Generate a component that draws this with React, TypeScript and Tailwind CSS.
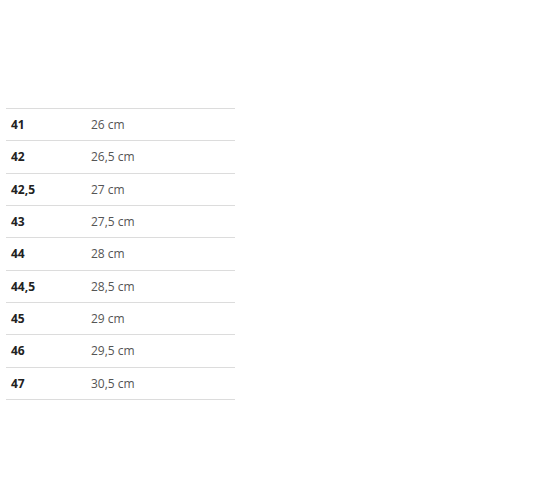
const sizes = [
  { eu: "41", cm: "26 cm" },
  { eu: "42", cm: "26,5 cm" },
  { eu: "42,5", cm: "27 cm" },
  { eu: "43", cm: "27,5 cm" },
  { eu: "44", cm: "28 cm" },
  { eu: "44,5", cm: "28,5 cm" },
  { eu: "45", cm: "29 cm" },
  { eu: "46", cm: "29,5 cm" },
  { eu: "47", cm: "30,5 cm" },
];

export default function App() {
  return (
    <div className="h-[490px] w-[560px] bg-white pt-[108px] pl-[6px] font-['Open_Sans',sans-serif]">
      <div className="w-[229px] border-t border-[#dcdcdc]">
        {sizes.map((s) => (
          <div
            key={s.eu}
            className="flex h-[32.33px] items-center border-b border-[#dcdcdc] pt-[1px] text-[12px]"
          >
            <span className="w-[85px] pl-[5px] font-bold text-[#222]">{s.eu}</span>
            <span className="text-[#555]">{s.cm}</span>
          </div>
        ))}
      </div>
    </div>
  );
}
